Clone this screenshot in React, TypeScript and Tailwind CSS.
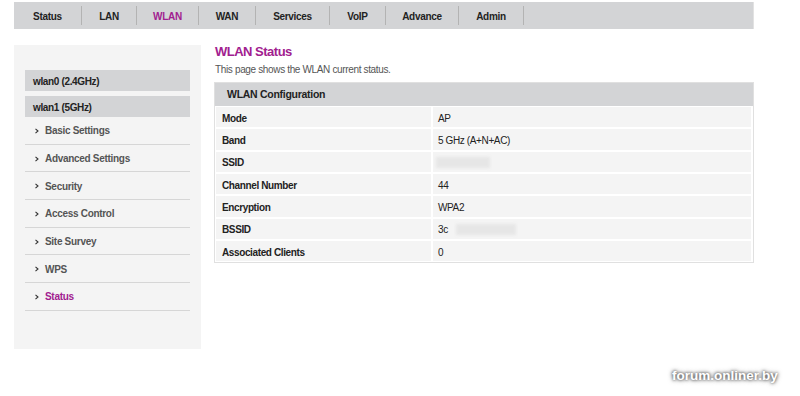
import React from "react";

const navItems = [
  { label: "Status", w: "w-[67px]" },
  { label: "LAN", w: "w-[54px]" },
  { label: "WLAN", w: "w-[61px]", active: true },
  { label: "WAN", w: "w-[56px]" },
  { label: "Services", w: "w-[73px]" },
  { label: "VoIP", w: "w-[55px]" },
  { label: "Advance", w: "w-[72px]" },
  { label: "Admin", w: "w-[64px]" },
];

const subItems = [
  "Basic Settings",
  "Advanced Settings",
  "Security",
  "Access Control",
  "Site Survey",
  "WPS",
  "Status",
];

function Blur({ w }: { w: string }) {
  return <span className={`inline-block h-[11px] ${w} bg-[#e6e6e6] blur-[1.5px]`} />;
}

const rows: { label: string; value: React.ReactNode }[] = [
  { label: "Mode", value: "AP" },
  { label: "Band", value: "5 GHz (A+N+AC)" },
  {
    label: "SSID",
    value: (
      <span className="-ml-[2px] inline-flex">
        <Blur w="w-[54px]" />
      </span>
    ),
  },
  { label: "Channel Number", value: "44" },
  { label: "Encryption", value: "WPA2" },
  {
    label: "BSSID",
    value: (
      <span className="flex items-center">
        3c
        <span className="ml-[8px] inline-flex">
          <Blur w="w-[60px]" />
        </span>
      </span>
    ),
  },
  { label: "Associated Clients", value: "0" },
];

function Chevron() {
  return (
    <svg width="4" height="6" viewBox="0 0 4 6" className="mr-[6px] ml-[10px]">
      <path d="M0.5 0.8 L3 3 L0.5 5.2" stroke="#333" strokeWidth="1.1" fill="none" />
    </svg>
  );
}

export default function App() {
  return (
    <div className="relative w-[800px] h-[396px] overflow-hidden bg-white font-['Liberation_Sans',Arial,sans-serif] text-[#222]">
      {/* top nav */}
      <div className="ml-[14px] mt-[2px] flex h-[27px] w-[740px] items-center bg-[#d3d4d6] border-r border-[#e2e2e2]">
        {navItems.map((it) => (
          <React.Fragment key={it.label}>
            <div
              className={`flex h-full ${it.w} items-center justify-center pt-[2px] text-[10px] font-bold tracking-[-0.3px] ${
                it.active ? "text-[#a1208f]" : "text-[#222]"
              }`}
            >
              {it.label}
            </div>
            <div className="h-[19px] w-px bg-[#b3b3b3]" />
          </React.Fragment>
        ))}
      </div>

      <div className="flex items-start">
        {/* sidebar */}
        <div className="ml-[14px] mt-[16px] h-[304px] w-[187px] bg-[#f4f4f4] px-[11px] pt-[25px]">
          <div className="flex h-[21px] items-center bg-[#d3d4d6] pl-[8px] pt-[1px] text-[10px] font-bold tracking-[-0.35px] text-[#222]">
            wlan0 (2.4GHz)
          </div>
          <div className="mt-[5px] flex h-[21px] items-center bg-[#d3d4d6] pl-[8px] pt-[1px] text-[10px] font-bold tracking-[-0.35px] text-[#222]">
            wlan1 (5GHz)
          </div>
          {subItems.map((s) => (
            <div
              key={s}
              className="flex h-[27.7px] items-center border-b border-[#d6d6d6] pt-[1px] text-[10px] font-bold tracking-[-0.3px]"
            >
              <Chevron />
              <span className={s === "Status" ? "text-[#a1208f]" : "text-[#555]"}>{s}</span>
            </div>
          ))}
        </div>

        {/* main */}
        <div className="ml-[13px] mt-[15px] w-[540px]">
          <div className="pl-[1px] text-[13px] font-bold leading-[16px] tracking-[-0.5px] text-[#a1208f]">
            WLAN Status
          </div>
          <div className="mt-[3px] pl-[1px] text-[10px] leading-[13px] tracking-[-0.35px] text-[#555]">
            This page shows the WLAN current status.
          </div>
          <div className="mt-[6px] border border-[#e0e0e0]">
            <div className="flex h-[23px] items-center bg-[#d3d4d6] pl-[12px] pt-[1px] text-[10.5px] font-bold tracking-[-0.28px] text-[#222]">
              WLAN Configuration
            </div>
            <div className="flex flex-col gap-[2px] px-[1px] pb-[1px] pt-[1px] pr-[2px]">
              {rows.map((r) => (
                <div key={r.label} className="flex h-[20.33px] gap-[2px] text-[10px] tracking-[-0.38px]">
                  <div className="flex w-[215px] items-center bg-[#f4f4f4] pl-[6px] pt-[2px] font-bold">
                    {r.label}
                  </div>
                  <div className="flex flex-1 items-center bg-[#f4f4f4] pl-[5px] pt-[2px]">{r.value}</div>
                </div>
              ))}
            </div>
          </div>
        </div>
      </div>

      {/* watermark overlay */}
      <div className="absolute left-[672px] top-[366px] text-[13.5px] font-bold text-white [text-shadow:0_0_3px_#444,0_0_5px_#666]">
        forum.onliner.by
      </div>
    </div>
  );
}
